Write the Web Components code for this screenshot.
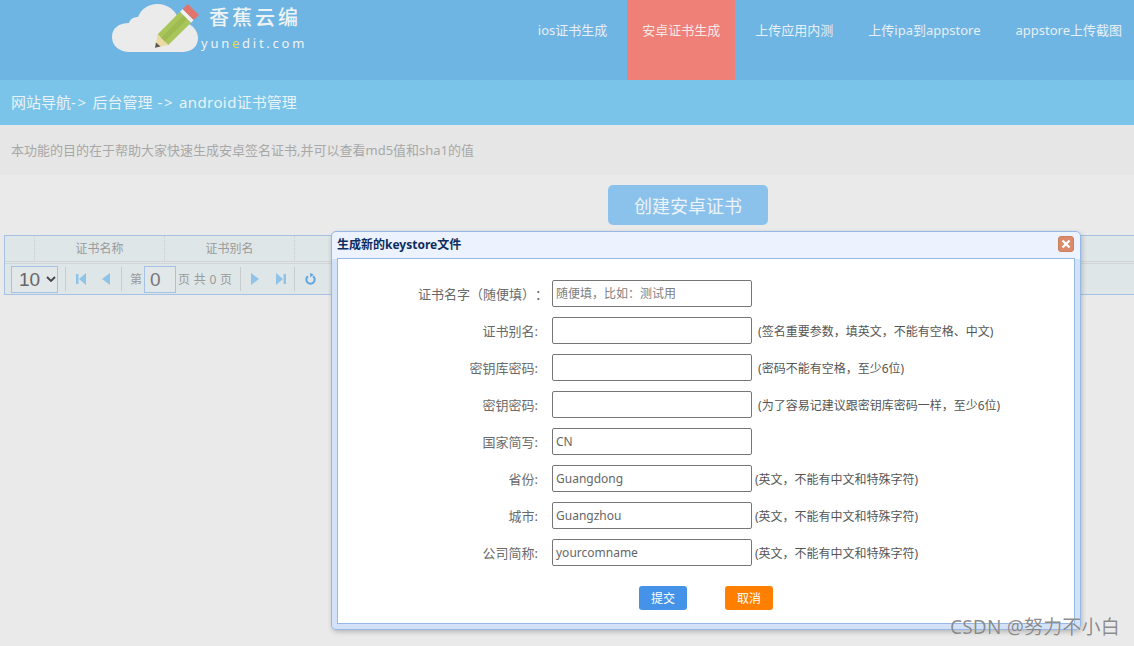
<!DOCTYPE html>
<html lang="zh">
<head>
<meta charset="utf-8">
<title>android证书管理</title>
<style>
    html, body { margin: 0; height: 100%; }
    body {
        position: relative;
        height: 646px;
        overflow: hidden;
        background: #eaeaea;
        font-family: "Noto Sans", "Noto Sans CJK SC", sans-serif;
    }
</style>
</head>
<body>
<yun-header>
    <yun-nav-item>ios证书生成</yun-nav-item>
    <yun-nav-item active>安卓证书生成</yun-nav-item>
    <yun-nav-item>上传应用内测</yun-nav-item>
    <yun-nav-item>上传ipa到appstore</yun-nav-item>
    <yun-nav-item>appstore上传截图</yun-nav-item>
</yun-header>
<yun-breadcrumb>网站导航<span class="arrow">-&gt;</span> 后台管理 <span class="arrow">-&gt;</span> <span class="latin">android</span>证书管理</yun-breadcrumb>
<yun-note>本功能的目的在于帮助大家快速生成安卓签名证书,并可以查看md5值和sha1的值</yun-note>
<yun-create-bar>创建安卓证书</yun-create-bar>
<yun-grid></yun-grid>

<yun-dialog heading="生成新的keystore文件">
    <yun-form-row wide label="证书名字（随便填）：" placeholder="随便填，比如：测试用"></yun-form-row>
    <yun-form-row label="证书别名:" hint=" (签名重要参数，填英文，不能有空格、中文)"></yun-form-row>
    <yun-form-row label="密钥库密码:" hint=" (密码不能有空格，至少6位)"></yun-form-row>
    <yun-form-row label="密钥密码:" hint=" (为了容易记建议跟密钥库密码一样，至少6位)"></yun-form-row>
    <yun-form-row label="国家简写:" value="CN"></yun-form-row>
    <yun-form-row label="省份:" value="Guangdong" hint="(英文，不能有中文和特殊字符)"></yun-form-row>
    <yun-form-row label="城市:" value="Guangzhou" hint="(英文，不能有中文和特殊字符)"></yun-form-row>
    <yun-form-row label="公司简称:" value="yourcomname" hint="(英文，不能有中文和特殊字符)"></yun-form-row>
</yun-dialog>
<yun-watermark>CSDN @努力不小白</yun-watermark>

<script>
/**
 * Top bar with the logo on the left and the slotted nav items on the right.
 * @element yun-header
 * @slot The <yun-nav-item> elements.
 */
class YunHeader extends HTMLElement {
    constructor() {
        super();
        this.attachShadow({ mode: 'open' });
        this.shadowRoot.innerHTML = `
            <style>
                :host {
                    display: flex;
                    height: 80px;
                    background: #6eb5e3;
                    padding-left: 112px;
                    box-sizing: border-box;
                }
                .logo { display: flex; height: 56px; }
                svg { display: block; flex: none; overflow: visible; }
                .words { margin-left: 3px; color: #eef3f6; }
                .cn {
                    font-size: 20px;
                    line-height: 24px;
                    letter-spacing: 3px;
                    margin: 6px 0 0 8px;
                    font-weight: 500;
                }
                .en {
                    font-size: 13px;
                    line-height: 16px;
                    letter-spacing: 2.75px;
                    margin-top: 5px;
                }
                .en b { color: #e6d94e; font-weight: 400; }
                nav { display: flex; gap: 5px; margin-left: auto; margin-right: -3px; }
            </style>
            <div class="logo">
                <svg width="86" height="56" viewBox="0 0 86 56">
                    <path fill="#ebebeb" d="M18 52C6 52 0 45 0 37C0 28 7 23 17 23C18 19 22 17 26 17C29 9 37 4 45 4C56 4 65 11 67 21C78 22 86 29 86 38C86 47 79 52 70 52Z"/>
                    <polygon fill="#ecd9a6" points="43,47.7 45.7,34.3 56.3,45"/>
                    <polygon fill="#5a5a50" points="43,47.7 44,42.5 48.5,46.5"/>
                    <polygon fill="#a9c65a" points="45.7,34.3 68,11.7 79,22.7 56.3,45"/>
                    <polygon fill="#9dbb50" points="49.2,37.8 71.6,15.3 75.2,18.9 52.8,41.5"/>
                    <polygon fill="#f2f2f2" points="68,11.7 70.7,9 81.7,20 79,22.7"/>
                    <polygon fill="#e2746c" points="70.7,9 75.7,4 87,15 81.7,20"/>
                </svg>
                <div class="words">
                    <div class="cn">香蕉云编</div>
                    <div class="en">yun<b>e</b>dit.com</div>
                </div>
            </div>
            <nav><slot></slot></nav>
        `;
    }
}
customElements.define('yun-header', YunHeader);

/**
 * One entry of the top navigation. The active attribute paints it salmon.
 * @element yun-nav-item
 */
class YunNavItem extends HTMLElement {
    constructor() {
        super();
        this.attachShadow({ mode: 'open' });
        this.shadowRoot.innerHTML = `
            <style>
                :host {
                    display: block;
                    padding: 20px 15px 0;
                    font-size: 13px;
                    line-height: 20px;
                    color: #e6eff5;
                    white-space: nowrap;
                }
                :host([active]) { background: #ef8078; color: #f7e9e6; }
            </style>
            <slot></slot>
        `;
    }
}
customElements.define('yun-nav-item', YunNavItem);

/**
 * Blue strip holding the site path.
 * @element yun-breadcrumb
 * @slot The path; arrows and latin words go in spans to get their wider spacing.
 */
class YunBreadcrumb extends HTMLElement {
    constructor() {
        super();
        this.attachShadow({ mode: 'open' });
        this.shadowRoot.innerHTML = `
            <style>
                :host {
                    display: block;
                    height: 45px;
                    padding-left: 11px;
                    background: #7ac4e9;
                    color: #e9f3f7;
                    font-size: 15px;
                    word-spacing: 1px;
                    line-height: 45px;
                }
                ::slotted(.arrow) { letter-spacing: 1.6px; }
                ::slotted(.latin) { letter-spacing: .4px; }
            </style>
            <slot></slot>
        `;
    }
}
customElements.define('yun-breadcrumb', YunBreadcrumb);

/**
 * Grey line that explains the page.
 * @element yun-note
 */
class YunNote extends HTMLElement {
    constructor() {
        super();
        this.attachShadow({ mode: 'open' });
        this.shadowRoot.innerHTML = `
            <style>
                :host {
                    display: block;
                    height: 50px;
                    padding-left: 11px;
                    background: #e6e6e6;
                    color: #a8a8a8;
                    font-size: 13px;
                    line-height: 50px;
                }
            </style>
            <slot></slot>
        `;
    }
}
customElements.define('yun-note', YunNote);

/**
 * Row that centres the big create button over the grid.
 * @element yun-create-bar
 */
class YunCreateBar extends HTMLElement {
    constructor() {
        super();
        this.attachShadow({ mode: 'open' });
        this.shadowRoot.innerHTML = `
            <style>
                :host {
                    display: block;
                    padding: 10px 0 10px 608px;
                }
                button {
                    display: block;
                    width: 160px;
                    height: 40px;
                    padding: 0;
                    border: 0;
                    border-radius: 5px;
                    background: #8bc2ec;
                    color: #edf3f8;
                    font: inherit;
                    font-size: 18px;
                }
            </style>
            <button><slot></slot></button>
        `;
    }
}
customElements.define('yun-create-bar', YunCreateBar);

/**
 * Empty data grid: column heads plus the pager bar.
 * @element yun-grid
 */
class YunGrid extends HTMLElement {
    constructor() {
        super();
        this.attachShadow({ mode: 'open' });
        this.shadowRoot.innerHTML = `
            <style>
                :host {
                    display: block;
                    margin-left: 4px;
                    height: 60px;
                    box-sizing: border-box;
                    border: 1px solid #a5c2e6;
                    border-right: 0;
                    background: #dfe6e8;
                    color: #9a9a9a;
                    font-size: 12px;
                }
                .head {
                    display: flex;
                    height: 26px;
                    box-sizing: border-box;
                    border-bottom: 1px solid #d2d5d5;
                }
                .head div {
                    border-right: 1px dotted #ccc;
                    text-align: center;
                    line-height: 26px;
                    flex: none;
                    width: 129px;
                }
                .head .num { width: 29px; }
                .rule { height: 2px; border-bottom: 1px solid #d2d5d5; box-sizing: border-box; }
            </style>
            <div class="head">
                <div class="num"></div>
                <div>证书名称</div>
                <div>证书别名</div>
            </div>
            <div class="rule"></div>
            <yun-pager></yun-pager>
        `;
    }
}
customElements.define('yun-grid', YunGrid);

/**
 * Pager bar: page size, arrows, page box and refresh.
 * @element yun-pager
 */
class YunPager extends HTMLElement {
    constructor() {
        super();
        this.attachShadow({ mode: 'open' });
        this.shadowRoot.innerHTML = `
            <style>
                :host {
                    display: flex;
                    align-items: center;
                    height: 30px;
                    padding-left: 6px;
                    color: #9a9a9a;
                    font-size: 12px;
                }
                .field {
                    box-sizing: border-box;
                    height: 27px;
                    border: 1px solid #a5c2e6;
                    background: #e2e8ea;
                    color: #777;
                    font-family: "Liberation Sans", sans-serif;
                    font-size: 19px;
                    line-height: 25px;
                    flex: none;
                }
                .size {
                    width: 47px;
                    padding-left: 7px;
                    display: flex;
                    align-items: center;
                    gap: 6px;
                    color: #666;
                }
                .page { width: 32px; padding-left: 5px; margin: 0 2px; }
                .sep { width: 1px; height: 24px; background: #c8cccc; flex: none; }
                svg { display: block; flex: none; }
                .txt { white-space: nowrap; flex: none; }
            </style>
            <div class="field size">10
                <svg width="10" height="6" viewBox="0 0 10 6"><path d="M1 1l4 4 4-4" fill="none" stroke="#444" stroke-width="1.8"/></svg>
            </div>
            <div class="sep" style="margin-left:7px"></div>
            <svg style="margin-left:10px" width="10" height="12" viewBox="0 0 10 12"><path fill="#8fc3e8" d="M0 1h2.5v10H0zM10 0v12L3 6z"/></svg>
            <svg style="margin-left:16px" width="8" height="12" viewBox="0 0 8 12"><path fill="#8fc3e8" d="M8 0v12L0 6z"/></svg>
            <div class="sep" style="margin-left:11px"></div>
            <span class="txt" style="margin-left:8px">第</span>
            <div class="field page">0</div>
            <span class="txt" style="word-spacing:.6px">页 共 0 页</span>
            <div class="sep" style="margin-left:8px"></div>
            <svg style="margin-left:10px" width="8" height="12" viewBox="0 0 8 12"><path fill="#8fc3e8" d="M0 0v12l8-6z"/></svg>
            <svg style="margin-left:17px" width="10" height="12" viewBox="0 0 10 12"><path fill="#8fc3e8" d="M0 0v12l7-6zM7.5 1H10v10H7.5z"/></svg>
            <div class="sep" style="margin-left:8px"></div>
            <svg style="margin-left:10px" width="11" height="12" viewBox="0 0 11 12"><path fill="none" stroke="#5ea5dc" stroke-width="2" d="M3 3.2a4.2 4.2 0 1 0 5 0"/><path fill="#5ea5dc" d="M5 0l3.6 1.6L5.4 4.6z"/></svg>
        `;
    }
}
customElements.define('yun-pager', YunPager);

/**
 * Modal window over the page. The heading attribute sets its title.
 * @element yun-dialog
 * @slot The <yun-form-row> elements.
 */
class YunDialog extends HTMLElement {
    constructor() {
        super();
        this.attachShadow({ mode: 'open' });
        this.shadowRoot.innerHTML = `
            <style>
                :host {
                    position: absolute;
                    left: 331px;
                    top: 231px;
                    width: 750px;
                    height: 399px;
                    box-sizing: border-box;
                    display: flex;
                    flex-direction: column;
                    padding: 0 5px 5px;
                    background: linear-gradient(#ecf2fe 0, #ecf2fe 27px, #d3e2f8 27px);
                    border: 1px solid #95b8e7;
                    border-radius: 5px;
                    box-shadow: 1px 2px 5px rgba(0,0,0,.22);
                }
                .title {
                    display: flex;
                    justify-content: space-between;
                    height: 26px;
                    flex: none;
                    font-size: 12px;
                    line-height: 26px;
                    font-weight: 700;
                    color: #0e2d5f;
                }
                .close {
                    width: 16px;
                    height: 16px;
                    margin: 4px 1px 0 0;
                    box-sizing: border-box;
                    border: 1px solid #c9805f;
                    border-radius: 3px;
                    background: #dc8a6c;
                }
                .close svg { display: block; }
                .body {
                    flex: 1;
                    background: #fff;
                    border: 1px solid #95b8e7;
                    padding-top: 21px;
                    display: flex;
                    flex-direction: column;
                    gap: 10px;
                }
                .actions {
                    display: flex;
                    gap: 38px;
                    padding: 10px 0 0 301px;
                }
                .actions button {
                    width: 48px;
                    height: 24px;
                    padding: 0;
                    border: 0;
                    border-radius: 3px;
                    color: #fff;
                    font: inherit;
                    font-size: 12px;
                }
                .ok { background: #4593e8; }
                .no { background: #ff8000; }
            </style>
            <div class="title">
                <span id="heading"></span>
                <div class="close">
                    <svg width="14" height="14" viewBox="0 0 14 14"><path d="M3.5 3.5l7 7M10.5 3.5l-7 7" stroke="#fff" stroke-width="2.4"/></svg>
                </div>
            </div>
            <div class="body">
                <slot></slot>
                <div class="actions">
                    <button class="ok">提交</button>
                    <button class="no">取消</button>
                </div>
            </div>
        `;
    }

    connectedCallback() {
        this.shadowRoot.getElementById('heading').textContent = this.getAttribute('heading');
    }
}
customElements.define('yun-dialog', YunDialog);

/**
 * Label, text box and optional hint on one line of the form.
 * The wide attribute lets a long label run into the gap before the box.
 * @element yun-form-row
 */
class YunFormRow extends HTMLElement {
    constructor() {
        super();
        this.attachShadow({ mode: 'open' });
        this.shadowRoot.innerHTML = `
            <style>
                :host {
                    display: flex;
                    align-items: center;
                    height: 27px;
                    font-size: 12px;
                    color: #666;
                }
                label {
                    width: 200px;
                    flex: none;
                    font-size: 13px;
                    text-align: right;
                    white-space: nowrap;
                    color: #6a6a6a;
                    text-spacing-trim: space-all;
                    font-feature-settings: "chws" 0;
                }
                :host([wide]) label { width: 210px; margin-right: -10px; }
                input {
                    width: 200px;
                    height: 27px;
                    box-sizing: border-box;
                    margin: 0 3px 0 14px;
                    padding: 0 3px;
                    border: 1px solid #767676;
                    border-radius: 2px;
                    font: inherit;
                    color: #666;
                    flex: none;
                }
                input::placeholder { color: #808080; opacity: 1; }
                span { white-space: pre; color: #555; font-size: 12px; }
            </style>
            <label></label><input type="text"><span></span>
        `;
    }

    connectedCallback() {
        const root = this.shadowRoot;
        root.querySelector('label').textContent = this.getAttribute('label');
        root.querySelector('span').textContent = this.getAttribute('hint') || '';
        const input = root.querySelector('input');
        input.placeholder = this.getAttribute('placeholder') || '';
        input.value = this.getAttribute('value') || '';
    }
}
customElements.define('yun-form-row', YunFormRow);

/**
 * Site watermark stamped over the bottom right corner.
 * @element yun-watermark
 */
class YunWatermark extends HTMLElement {
    constructor() {
        super();
        this.attachShadow({ mode: 'open' });
        this.shadowRoot.innerHTML = `
            <style>
                :host {
                    position: absolute;
                    left: 950px;
                    top: 614px;
                    font-size: 19px;
                    letter-spacing: .2px;
                    line-height: 26px;
                    color: rgba(120,120,120,.85);
                    text-shadow: 0 0 1px rgba(255,255,255,.7);
                    white-space: nowrap;
                }
            </style>
            <slot></slot>
        `;
    }
}
customElements.define('yun-watermark', YunWatermark);
</script>
</body>
</html>
